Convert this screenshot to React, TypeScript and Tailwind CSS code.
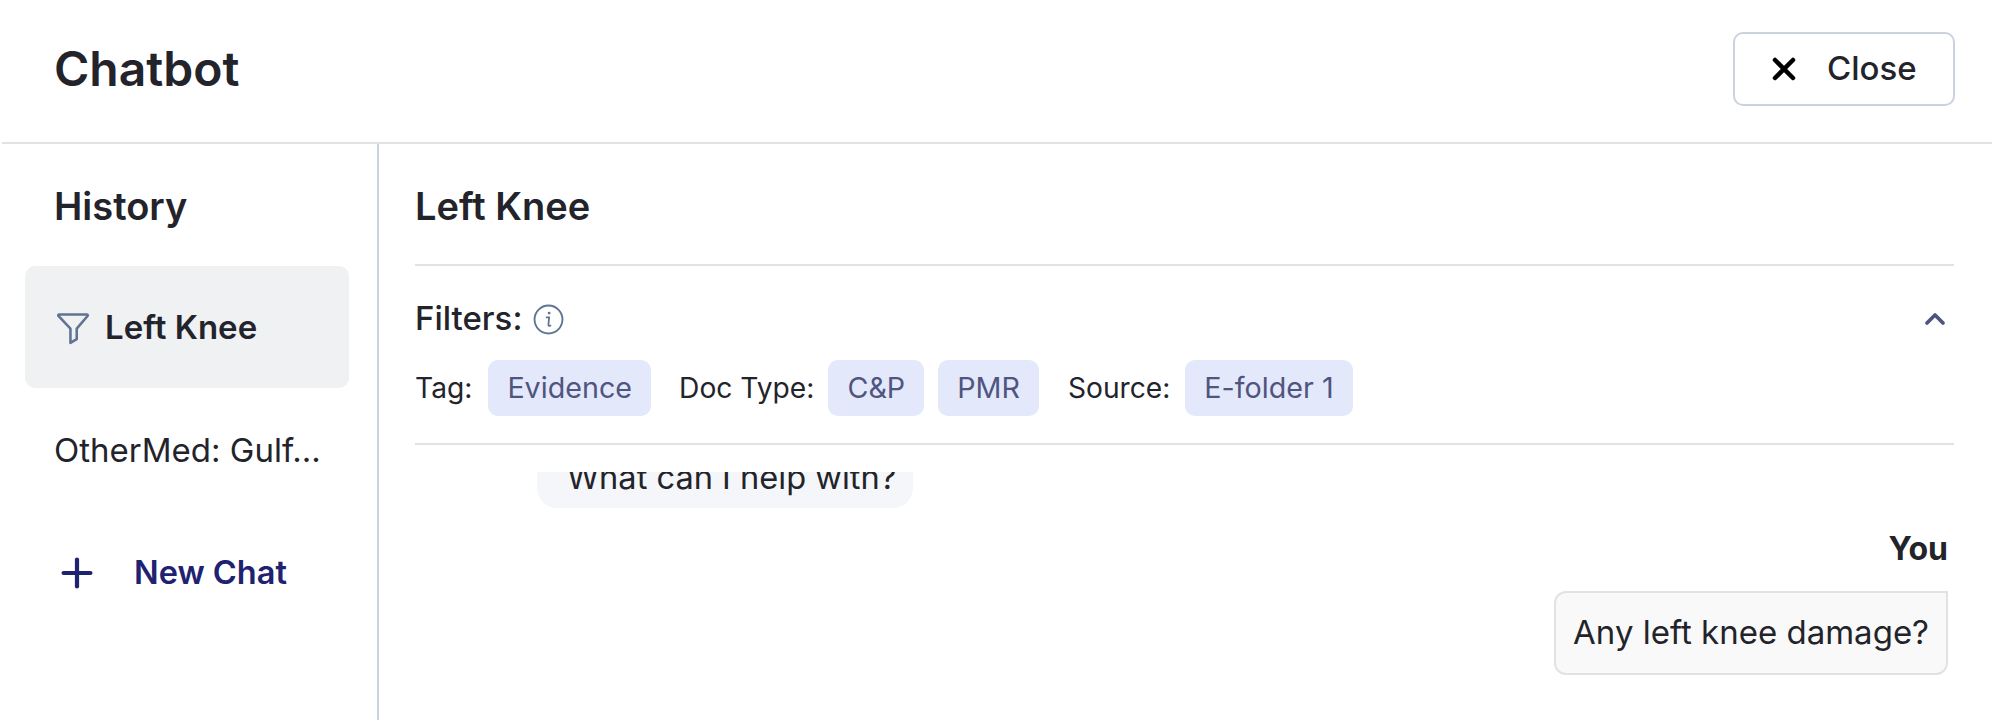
import { Plus, X, ChevronUp } from 'lucide-react';

function FunnelIcon() {
  return (
    <svg width="34" height="34" viewBox="0 0 32 32" fill="none" className="shrink-0">
      <path
        d="M3 3.2h26c.8 0 1.2.9.7 1.5L19.5 16.6V26.5L13.6 30V16.6L2.3 4.7c-.5-.6-.1-1.5.7-1.5Z"
        stroke="#5f7493"
        strokeWidth="2.4"
        strokeLinejoin="round"
      />
    </svg>
  );
}

function InfoIcon() {
  return (
    <svg width="31" height="31" viewBox="0 0 30 30" fill="none" className="shrink-0">
      <circle cx="15" cy="15" r="13.5" stroke="#5f7493" strokeWidth="1.8" />
      <circle cx="15.6" cy="8.8" r="1.4" fill="#5f7493" />
      <path d="M13.2 13h2.4l-.7 7.2c0 1.2.9 1.3 2 .6" stroke="#5f7493" strokeWidth="1.7" strokeLinecap="round" />
    </svg>
  );
}

function Chip({ children }: { children: string }) {
  return (
    <span className="flex h-[56px] items-center rounded-[10px] bg-[#e3e8fa] px-[19px] text-[28.7px] text-[#50557f]">
      {children}
    </span>
  );
}

export default function App() {
  return (
    <div className="h-[720px] w-[1992px] overflow-hidden bg-white pl-[2px] font-['Inter',sans-serif] text-[#23242b]">
      {/* Top bar */}
      <header className="flex h-[144px] items-center justify-between border-b-2 border-[#e2e2e6] pb-[4px] pl-[52px] pr-[37px]">
        <h1 className="text-[48px] font-semibold">Chatbot</h1>
        <button className="flex h-[74px] w-[222px] items-center gap-[25px] rounded-[10px] border-[2.5px] border-[#ccd2e0] pl-[31px] text-[33px] font-medium">
          <X size={36} strokeWidth={3} className="text-black" />
          Close
        </button>
      </header>

      <div className="flex h-[576px]">
        {/* History */}
        <aside className="w-[377px] shrink-0 border-r-2 border-[#ccd3e0] pl-[23px] pr-[28px]">
          <h2 className="flex h-[122px] items-center pl-[29px] pt-[2px] text-[38px] font-semibold">History</h2>
          <div className="flex h-[122px] items-center gap-[15px] rounded-[10px] bg-[#f0f1f3] pl-[31px] pt-[2px] text-[33px] font-semibold">
            <FunnelIcon />
            Left Knee
          </div>
          <div className="flex h-[122px] items-center truncate pl-[29px] pt-[4px] text-[33px]">OtherMed: Gulf...</div>
          <div className="flex h-[122px] items-center gap-[34px] pl-[30px] pt-[4px] text-[32.5px] font-semibold text-[#1e2270]">
            <Plus size={46} strokeWidth={2.2} className="-ml-[1px]" />
            New Chat
          </div>
        </aside>

        {/* Conversation */}
        <main className="min-w-0 flex-1 pl-[36px] pr-[38px]">
          <h2 className="flex h-[122px] items-center border-b-2 border-[#e2e2e6] pt-[4px] text-[38px] font-semibold">
            Left Knee
          </h2>
          <div className="border-b-2 border-[#e2e2e6] pb-[27px]">
            <div className="flex h-[94px] items-center justify-between pr-[3px] pt-[12px]">
              <div className="flex items-center gap-[11px] text-[33px] font-medium">
                Filters:
                <InfoIcon />
              </div>
              <ChevronUp size={32} strokeWidth={2.8} className="text-[#50557f]" />
            </div>
            <div className="flex items-center text-[28.2px]">
              <span className="mr-[16px]">Tag:</span>
              <Chip>Evidence</Chip>
              <span className="ml-[28px] mr-[14px]">Doc Type:</span>
              <Chip>C&amp;P</Chip>
              <span className="w-[14px]" />
              <Chip>PMR</Chip>
              <span className="ml-[29px] mr-[15px]">Source:</span>
              <Chip>E-folder 1</Chip>
            </div>
          </div>

          {/* Messages, scrolled so the first bubble is cut off */}
          <div className="mt-[27px] h-[220px] overflow-hidden pr-[6px]">
            <div className="-mt-[23px] ml-[122px] w-[376px] rounded-[20px] bg-[#f5f6f9] pb-[11px] pl-[30px] pt-[8px] text-[32.6px] leading-[40px]">
              What can I help with?
            </div>
            <div className="mt-[18px] text-right text-[32px] font-bold leading-[46px]">You</div>
            <div className="mt-[19px] flex justify-end">
              <div className="flex h-[84px] items-center rounded-[12px] rounded-tr-none border-2 border-[#e2e2e2] bg-[#f9f9f9] px-[17px] text-[33px]">
                Any left knee damage?
              </div>
            </div>
          </div>
        </main>
      </div>
    </div>
  );
}
